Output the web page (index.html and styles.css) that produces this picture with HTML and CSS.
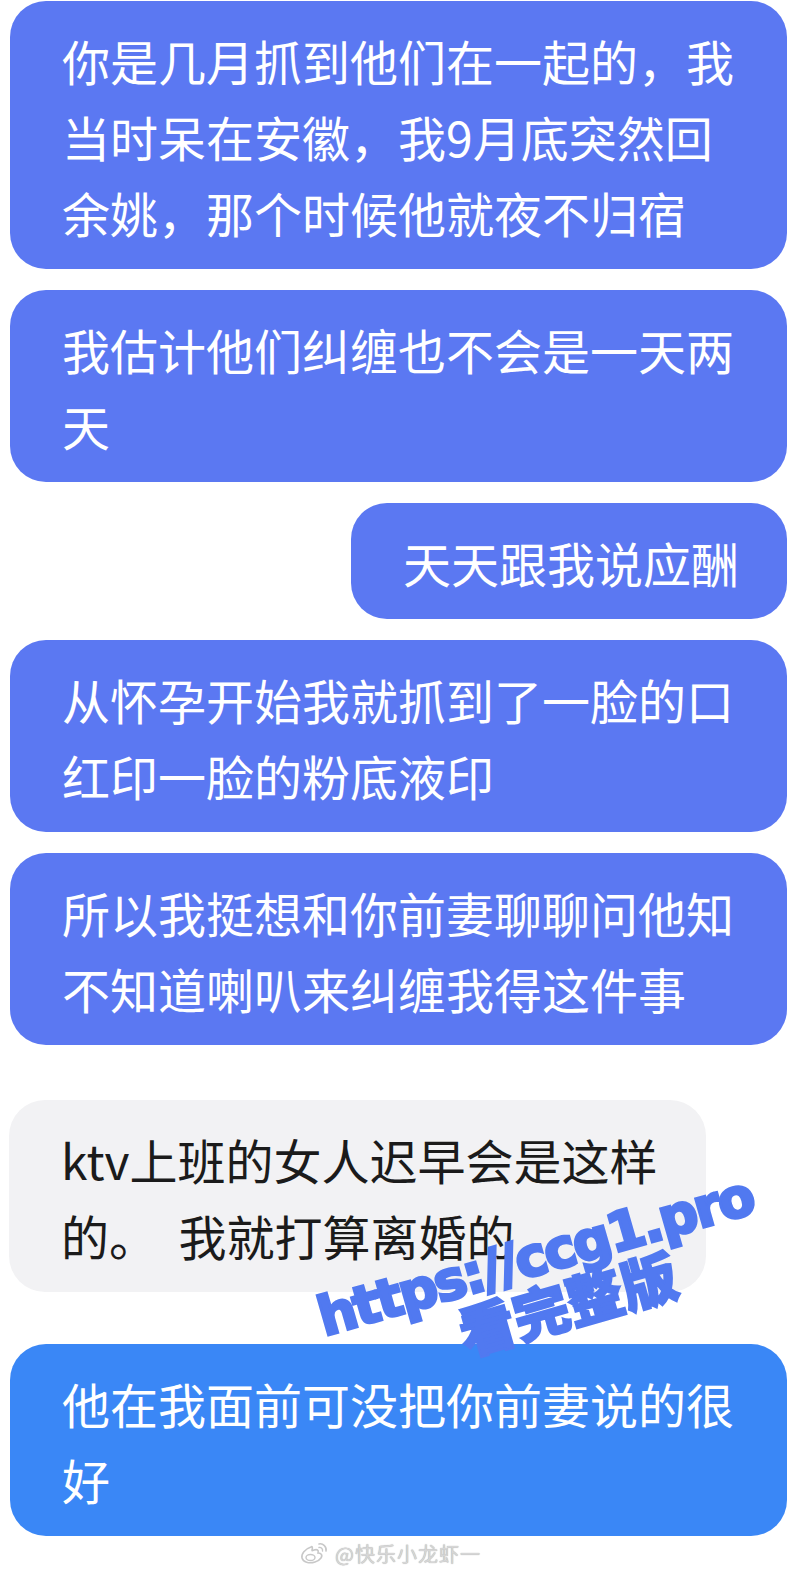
FILE: index.html
```html
<!DOCTYPE html>
<html lang="zh-CN">
<head>
<meta charset="utf-8">
<title>聊天记录</title>
<link rel="stylesheet" href="styles.css">
</head>
<body>
<div class="page">
  <div class="chat">
    <div class="bubble blue">你是几月抓到他们在一起的，我当时呆在安徽，我9月底突然回余姚，那个时候他就夜不归宿</div>
    <div class="bubble blue">我估计他们纠缠也不会是一天两天</div>
    <div class="bubble blue right">天天跟我说应酬</div>
    <div class="bubble blue">从怀孕开始我就抓到了一脸的口红印一脸的粉底液印</div>
    <div class="bubble blue">所以我挺想和你前妻聊聊问他知不知道喇叭来纠缠我得这件事</div>
    <div class="bubble grey">ktv上班的女人迟早会是这样的。&nbsp; 我就打算离婚的</div>
    <div class="bubble bright">他在我面前可没把你前妻说的很好</div>
  </div>
  <div class="weibo">
    <svg class="weibo-logo" width="30" height="24" viewBox="0 0 30 24">
      <path d="M12 6 C6 8 2 13 3 17 C4 21 10 23 16 21 C22 19 24 15 22 13 C21 12 19 12 19 12 C20 9 18 8 15 9 C13 10 13 10 13 9 C14 6 13 5 12 6 Z" fill="none" stroke="#c8c8c8" stroke-width="1.6"/>
      <ellipse cx="11.5" cy="16.5" rx="4.5" ry="3" fill="none" stroke="#c8c8c8" stroke-width="1.4"/>
      <path d="M20 3 C24 2 28 6 27 10" fill="none" stroke="#c8c8c8" stroke-width="1.6" stroke-linecap="round"/>
      <path d="M20 6.5 C22 6 24 8 23.5 10" fill="none" stroke="#c8c8c8" stroke-width="1.4" stroke-linecap="round"/>
    </svg>
    <span class="weibo-name">@快乐小龙虾一</span>
  </div>
  <div class="mark">
    <div class="mark-url">https://ccg1.pro</div>
    <div class="mark-cta">看完整版</div>
  </div>
</div>
</body>
</html>
```

FILE: styles.css
```css
html, body {
  margin: 0;
  padding: 0;
  background: #ffffff;
}

.page {
  position: relative;
  width: 800px;
  min-height: 1573px;
  overflow: hidden;
  font-family: "Noto Sans CJK SC", "Noto Sans", sans-serif;
}

.chat {
  display: flex;
  flex-direction: column;
  align-items: stretch;
  gap: 21px;
  padding: 1px 13px 0 10px;
}

.bubble {
  border-radius: 36px;
  padding: 21px 48px 19px 52px;
  font-size: 48px;
  line-height: 76px;
  font-weight: 400;
}

.blue {
  background: #5b78f2;
  color: #ffffff;
}

.right {
  align-self: flex-end;
}

.grey {
  align-self: flex-start;
  max-width: 697px;
  box-sizing: border-box;
  padding-right: 40px;
  margin-left: -1px;
  background: #f2f2f4;
  color: #1b1b1b;
  margin-top: 34px;
}

.bright {
  background: #3a87f6;
  color: #ffffff;
  margin-top: 31px;
}

.weibo {
  display: flex;
  align-items: center;
  justify-content: center;
  gap: 6px;
  height: 34px;
  padding-right: 20px;
}

.weibo-name {
  font-size: 20px;
  color: #d6d6d6;
  letter-spacing: 1px;
  text-shadow: 0 0 1px #9a9a9a;
}

.mark {
  position: absolute;
  left: 311px;
  top: 1290px;
  width: 500px;
  color: #5179f0;
  transform: rotate(-16deg);
  transform-origin: 0 0;
}

.mark-url {
  font-family: "DejaVu Sans", sans-serif;
  font-size: 54px;
  font-weight: bold;
  line-height: 60px;
  letter-spacing: -2.2px;
  white-space: nowrap;
  -webkit-text-stroke: 3px #5179f0;
}

.mark-cta {
  font-family: "Noto Sans CJK SC", sans-serif;
  font-size: 56px;
  font-weight: 900;
  line-height: 44px;
  margin-left: 131px;
  white-space: nowrap;
  -webkit-text-stroke: 2px #5179f0;
}
```
